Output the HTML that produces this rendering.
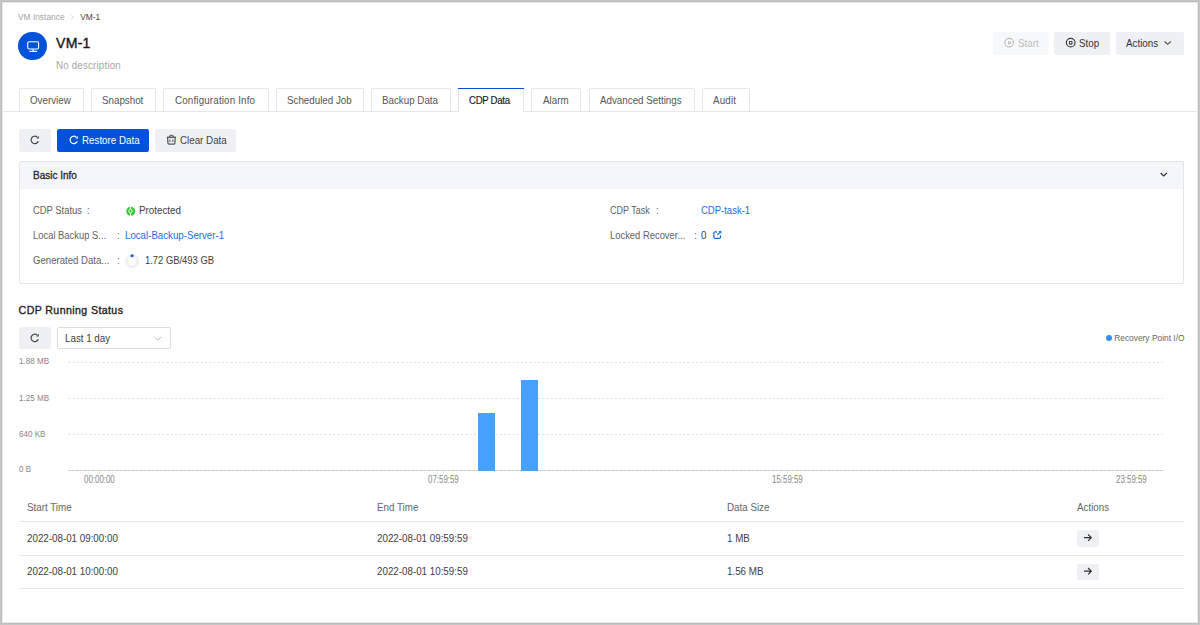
<!DOCTYPE html>
<html><head><meta charset="utf-8">
<style>
*{box-sizing:border-box;margin:0;padding:0}
html,body{width:1200px;height:625px;overflow:hidden;background:#fff}
body{font-family:"Liberation Sans",sans-serif;font-size:9.8px;line-height:1;color:#333;position:relative}
.frame{position:absolute;left:0;top:0;width:1200px;height:625px;border:1px solid #c6c6c6;box-shadow:inset 0 0 0 1px #bcbcbc,inset 0 0 0 2px #ebebeb;z-index:50;pointer-events:none}
.a{position:absolute;white-space:nowrap;line-height:1}
.btn{position:absolute;height:23px;border-radius:2px;background:#eff0f4}
.tab{position:absolute;top:88px;height:23.5px;border:1px solid #e4e6eb;border-bottom:none;border-radius:2px 2px 0 0;background:#fff}
.tt{position:absolute;top:96px;color:#555;line-height:1;white-space:nowrap}
.lbl{color:#616161}
.val{color:#3d3d3d}
.link{color:#1d6ae0}
.ylab{font-size:8.5px;color:#868686;transform:scaleX(0.95);transform-origin:0 0}
.grid{position:absolute;left:68px;width:1095px;height:1px}
.bar{position:absolute;background:#47a1ff}
.th{color:#666}
.td{color:#404040}
.hr{position:absolute;left:18.6px;width:1165.4px;height:1px;background:#e6e8eb}
svg{position:absolute;overflow:visible}
</style></head><body>
<div class="frame"></div>

<!-- breadcrumb -->
<div class="a" style="left:18px;top:13px;font-size:8.4px;color:#a3a3a3">VM Instance</div>
<svg style="left:70px;top:14px" width="5" height="6" viewBox="0 0 5 6"><path d="M1.2 1 L3.4 3.1 L1.2 5.2" fill="none" stroke="#d0d0d0" stroke-width="0.9"/></svg>
<div class="a" style="left:80.2px;top:13px;font-size:8.4px;color:#454545">VM-1</div>

<!-- avatar -->
<div class="a" style="left:18.4px;top:31.9px;width:28.6px;height:28.6px;border-radius:50%;background:#0052d9"></div>
<svg style="left:0;top:0" width="1" height="1" viewBox="0 0 1 1">
<rect x="27.7" y="41.7" width="10.9" height="7.3" rx="1.4" fill="none" stroke="#fff" stroke-width="1.1"/>
<path d="M33.15 49 V51.3 M29.4 51.4 H36.9" stroke="#fff" stroke-width="1.1" fill="none"/>
</svg>
<div class="a" style="left:56.1px;top:36px;font-size:14.1px;color:#1a1a1a;letter-spacing:0.2px;-webkit-text-stroke:0.4px #1a1a1a">VM-1</div>
<div class="a" style="left:55.9px;top:61px;font-size:10.19px;color:#a6a6a6;letter-spacing:0.18px;transform:scaleX(0.9617);transform-origin:0 0">No description</div>

<!-- header buttons -->
<div class="btn" style="left:993px;top:32.2px;width:55.6px;height:22.6px;background:#f7f8fa"></div>
<svg style="left:0;top:0" width="1" height="1"><circle cx="1009.2" cy="42.7" r="4.3" fill="none" stroke="#bdbdbd" stroke-width="1.1"/><path d="M1008.6 41.4 L1011.3 42.8 L1008.6 44.2 Z" fill="none" stroke="#bdbdbd" stroke-width="1" stroke-linejoin="round"/></svg>
<div class="a" style="left:1017.6px;top:39px;color:#bcbcbc;font-size:10.19px;transform:scaleX(0.9617);transform-origin:0 0">Start</div>
<div class="btn" style="left:1054px;top:32.2px;width:56px;height:22.6px"></div>
<svg style="left:0;top:0" width="1" height="1"><circle cx="1070.7" cy="42.65" r="4.3" fill="none" stroke="#3a3a3a" stroke-width="1.2"/><rect x="1069.4" y="41.5" width="2.6" height="2.6" rx="0.5" fill="none" stroke="#3a3a3a" stroke-width="1.1"/></svg>
<div class="a" style="left:1079.2px;top:39px;color:#333;font-size:10.19px;transform:scaleX(0.9617);transform-origin:0 0">Stop</div>
<div class="btn" style="left:1116px;top:32.2px;width:68px;height:22.6px"></div>
<div class="a" style="left:1126.2px;top:39px;color:#333;font-size:10.19px;transform:scaleX(0.9617);transform-origin:0 0">Actions</div>
<svg style="left:0;top:0" width="1" height="1"><path d="M1164.6 41.5 L1167.7 44.4 L1170.8 41.5" fill="none" stroke="#4a4a4a" stroke-width="1.05"/></svg>

<!-- tabs -->
<div class="a" style="left:2px;top:111px;width:1196px;height:1px;background:#e4e6eb;z-index:1"></div>
<div class="tab" style="left:18.5px;width:65.5px"></div><div class="tt" style="left:30.2px;font-size:10.19px;transform:scaleX(0.9617);transform-origin:0 0">Overview</div>
<div class="tab" style="left:90.7px;width:65.5px"></div><div class="tt" style="left:102.3px;font-size:10.19px;transform:scaleX(0.9617);transform-origin:0 0">Snapshot</div>
<div class="tab" style="left:163px;width:105.5px"></div><div class="tt" style="left:174.6px;letter-spacing:0.17px;font-size:10.19px;transform:scaleX(0.9617);transform-origin:0 0">Configuration Info</div>
<div class="tab" style="left:275.5px;width:88px"></div><div class="tt" style="left:286.8px;font-size:10.19px;transform:scaleX(0.9617);transform-origin:0 0">Scheduled Job</div>
<div class="tab" style="left:370.5px;width:80.5px"></div><div class="tt" style="left:382.2px;font-size:10.19px;transform:scaleX(0.9617);transform-origin:0 0">Backup Data</div>
<div class="tab" style="left:457.5px;width:66px;height:24px;border-top:none;z-index:2"></div>
<div class="a" style="left:457.5px;top:88px;width:66.5px;height:1.4px;background:#0052d9;z-index:3"></div>
<div class="tt" style="left:469.4px;font-size:10.0px;letter-spacing:-0.3px;color:#1f1f1f;-webkit-text-stroke:0.2px #1f1f1f;z-index:4;transform:scaleX(0.96);transform-origin:0 0">CDP Data</div>
<div class="tab" style="left:530.6px;width:50px"></div><div class="tt" style="left:542.8px;font-size:10.19px;transform:scaleX(0.9617);transform-origin:0 0">Alarm</div>
<div class="tab" style="left:588.5px;width:106.3px"></div><div class="tt" style="left:600px;font-size:10.19px;transform:scaleX(0.9617);transform-origin:0 0">Advanced Settings</div>
<div class="tab" style="left:702px;width:47.5px"></div><div class="tt" style="left:713.2px;letter-spacing:0.2px;font-size:10.19px;transform:scaleX(0.9617);transform-origin:0 0">Audit</div>

<!-- toolbar -->
<div class="btn" style="left:19px;top:129.2px;width:31.8px;height:22.6px"></div>
<svg style="left:29px;top:134px" width="12" height="12" viewBox="0 0 12 12"><path d="M9.28 7.17 A3.7 3.7 0 1 1 8.18 3.07" fill="none" stroke="#444" stroke-width="1.2"/><path d="M9.9 1.9 L9.9 4.6 L7.2 4.5 Z" fill="#444"/></svg>
<div class="btn" style="left:57px;top:129.2px;width:92px;height:22.6px;background:#0052d9"></div>
<svg style="left:67.7px;top:134px" width="12" height="12" viewBox="0 0 12 12"><path d="M9.28 7.17 A3.7 3.7 0 1 1 8.18 3.07" fill="none" stroke="#fff" stroke-width="1.2"/><path d="M9.9 1.9 L9.9 4.6 L7.2 4.5 Z" fill="#fff"/></svg>
<div class="a" style="left:82.3px;top:136px;color:#fff;font-size:10.19px;transform:scaleX(0.9617);transform-origin:0 0">Restore Data</div>
<div class="btn" style="left:155px;top:129.2px;width:81px;height:22.6px"></div>
<svg style="left:166px;top:134px" width="11" height="12" viewBox="0 0 11 12"><path d="M0.7 3.3 H10.1" stroke="#555" stroke-width="1.3"/><path d="M3.5 3.3 L4.1 1.6 Q4.3 1.2 4.8 1.2 H6.1 Q6.6 1.2 6.8 1.6 L7.4 3.3" fill="none" stroke="#555" stroke-width="1.15"/><path d="M1.6 3.3 L1.9 9.2 Q2 10 2.8 10 H8 Q8.8 10 8.9 9.2 L9.2 3.3" fill="none" stroke="#555" stroke-width="1.25"/><path d="M3.9 5.5 V8 M6.8 5.5 V8" stroke="#555" stroke-width="1"/></svg>
<div class="a" style="left:179.5px;top:136px;color:#444;font-size:10.19px;transform:scaleX(0.9617);transform-origin:0 0">Clear Data</div>

<!-- basic info panel -->
<div class="a" style="left:19px;top:161.3px;width:1165px;height:122.5px;border:1px solid #e4e6eb;border-radius:2px;background:#fff"></div>
<div class="a" style="left:20px;top:162px;width:1163px;height:26.8px;background:#f5f6f9"></div>
<div class="a" style="left:33.3px;top:171px;font-size:10.4px;color:#262626;-webkit-text-stroke:0.3px #262626;transform:scaleX(0.9615);transform-origin:0 0">Basic Info</div>
<svg style="left:0;top:0" width="1" height="1"><path d="M1160.6 173 L1163.7 175.9 L1166.8 173" fill="none" stroke="#333" stroke-width="1.2"/></svg>

<div class="a lbl" style="left:33px;top:206px;font-size:10.0px;transform:scaleX(0.94);transform-origin:0 0">CDP Status</div>
<div class="a lbl" style="left:87.4px;top:206px;font-size:10.19px;transform:scaleX(0.9617);transform-origin:0 0">:</div>
<svg style="left:0;top:0" width="1" height="1"><circle cx="130.75" cy="211.25" r="4.5" fill="#3cc83c"/><path d="M130.6 206.4 V208.3 L128.6 211.3 L130.5 213.6 V216.1 M130.6 208.3 L132.3 211.1 L130.5 213.6" fill="none" stroke="#fff" stroke-width="0.95" stroke-linejoin="round"/></svg>
<div class="a val" style="left:139.3px;top:206px;font-size:10.19px;transform:scaleX(0.9617);transform-origin:0 0">Protected</div>

<div class="a lbl" style="left:33px;top:231px;font-size:10.0px;transform:scaleX(0.94);transform-origin:0 0">Local Backup S...</div>
<div class="a lbl" style="left:116.9px;top:231px;font-size:10.19px;transform:scaleX(0.9617);transform-origin:0 0">:</div>
<div class="a link" style="left:125px;top:231px;font-size:10.09px;transform:scaleX(0.9613);transform-origin:0 0">Local-Backup-Server-1</div>

<div class="a lbl" style="left:33px;top:256px;font-size:10.0px;transform:scaleX(0.96);transform-origin:0 0">Generated Data...</div>
<div class="a lbl" style="left:116.9px;top:256px;font-size:10.19px;transform:scaleX(0.9617);transform-origin:0 0">:</div>
<svg style="left:0;top:0" width="1" height="1"><circle cx="132.2" cy="261.2" r="5.6" fill="none" stroke="#f1f1f1" stroke-width="2.9"/><circle cx="132.1" cy="255.7" r="1.55" fill="#0a58f0"/></svg>
<div class="a val" style="left:145.3px;top:256px;font-size:10.0px;transform:scaleX(0.94);transform-origin:0 0">1.72 GB/493 GB</div>

<div class="a lbl" style="left:609.8px;top:206px;font-size:10.0px;transform:scaleX(0.9);transform-origin:0 0">CDP Task</div>
<div class="a lbl" style="left:655.8px;top:206px;font-size:10.19px;transform:scaleX(0.9617);transform-origin:0 0">:</div>
<div class="a link" style="left:701.4px;top:206px;font-size:10.0px;transform:scaleX(0.95);transform-origin:0 0">CDP-task-1</div>
<div class="a lbl" style="left:609.8px;top:231px;font-size:10.0px;transform:scaleX(0.94);transform-origin:0 0">Locked Recover...</div>
<div class="a lbl" style="left:693.5px;top:231px;font-size:10.19px;transform:scaleX(0.9617);transform-origin:0 0">:</div>
<div class="a val" style="left:701.4px;top:231px;font-size:10.19px;transform:scaleX(0.9617);transform-origin:0 0">0</div>
<svg style="left:0;top:0" width="1" height="1"><path d="M717 231.8 H715 Q713.9 231.8 713.9 232.9 V237.3 Q713.9 238.4 715 238.4 H719.4 Q720.5 238.4 720.5 237.3 V235.2" fill="none" stroke="#1d6ae0" stroke-width="1.2"/><path d="M717.4 235 L720.3 232.1" stroke="#1d6ae0" stroke-width="1.2"/><path d="M718.3 231 H721.4 V234.1 Z" fill="#1d6ae0"/></svg>

<!-- running status -->
<div class="a" style="left:18.6px;top:305px;font-size:10.6px;letter-spacing:0.4px;color:#1f1f1f;-webkit-text-stroke:0.35px #1f1f1f">CDP Running Status</div>
<div class="btn" style="left:18.7px;top:326.7px;width:32.3px;height:22.3px"></div>
<svg style="left:29px;top:331.6px" width="12" height="12" viewBox="0 0 12 12"><path d="M9.28 7.17 A3.7 3.7 0 1 1 8.18 3.07" fill="none" stroke="#444" stroke-width="1.2"/><path d="M9.9 1.9 L9.9 4.6 L7.2 4.5 Z" fill="#444"/></svg>
<div class="a" style="left:57.4px;top:326.5px;width:113.3px;height:22.5px;border:1px solid #dcdde0;border-radius:2px"></div>
<div class="a val" style="left:65.2px;top:334px;font-size:10.19px;transform:scaleX(0.9617);transform-origin:0 0">Last 1 day</div>
<svg style="left:0;top:0" width="1" height="1"><path d="M154.3 337.2 L157.8 339.9 L161.2 337.2" fill="none" stroke="#b0b0b0" stroke-width="0.9"/></svg>

<div class="a" style="left:1105.85px;top:334.85px;width:5.8px;height:5.8px;border-radius:50%;background:#3291f8"></div>
<div class="a" style="left:1114.2px;top:334px;font-size:8.4px;color:#666">Recovery Point I/O</div>

<div class="a ylab" style="left:18.8px;top:357px">1.88 MB</div>
<div class="a ylab" style="left:18.8px;top:394px">1.25 MB</div>
<div class="a ylab" style="left:18.8px;top:430px">640 KB</div>
<div class="a ylab" style="left:18.8px;top:465px">0 B</div>
<svg class="grid" style="top:362px" width="1095" height="1"><line x1="0.3" y1="0.5" x2="1095" y2="0.5" stroke="#dcdee1" stroke-width="1" stroke-dasharray="2.1 2.17"/></svg>
<svg class="grid" style="top:398px" width="1095" height="1"><line x1="0.3" y1="0.5" x2="1095" y2="0.5" stroke="#dcdee1" stroke-width="1" stroke-dasharray="2.1 2.17"/></svg>
<svg class="grid" style="top:434px" width="1095" height="1"><line x1="0.3" y1="0.5" x2="1095" y2="0.5" stroke="#dcdee1" stroke-width="1" stroke-dasharray="2.1 2.17"/></svg>
<div class="a" style="left:68px;top:470px;width:1095px;height:1px;background-image:linear-gradient(to right,#cfcfcf 0 3px,#e6e6e6 3px 4px);background-size:4px 1px"></div>
<div class="a" style="left:99.2px;top:470px;width:1px;height:3px;background:#dcdcdc"></div>
<div class="a" style="left:443.2px;top:470px;width:1px;height:3px;background:#dcdcdc"></div>
<div class="a" style="left:787.2px;top:470px;width:1px;height:3px;background:#dcdcdc"></div>
<div class="a" style="left:1131.2px;top:470px;width:1px;height:3px;background:#dcdcdc"></div>
<div class="bar" style="left:478px;top:412.7px;width:17px;height:58.3px"></div>
<div class="bar" style="left:521px;top:380px;width:17px;height:91px"></div>
<div class="a ylab" style="left:84px;top:475px;font-size:10px;transform:scaleX(0.79)">00:00:00</div>
<div class="a ylab" style="left:428px;top:475px;font-size:10px;transform:scaleX(0.79)">07:59:59</div>
<div class="a ylab" style="left:772px;top:475px;font-size:10px;transform:scaleX(0.79)">15:59:59</div>
<div class="a ylab" style="left:1116px;top:475px;font-size:10px;transform:scaleX(0.79)">23:59:59</div>

<!-- table -->
<div class="a" style="left:18.6px;top:493.5px;width:1165.4px;height:28px;background:#fefefe"></div>
<div class="a th" style="left:27.4px;top:503px;font-size:10.19px;transform:scaleX(0.9617);transform-origin:0 0">Start Time</div>
<div class="a th" style="left:377px;top:503px;font-size:10.19px;transform:scaleX(0.9617);transform-origin:0 0">End Time</div>
<div class="a th" style="left:727px;top:503px;font-size:10.19px;transform:scaleX(0.9617);transform-origin:0 0">Data Size</div>
<div class="a th" style="left:1077px;top:503px;font-size:10.19px;transform:scaleX(0.9617);transform-origin:0 0">Actions</div>
<div class="hr" style="top:521px"></div>
<div class="a td" style="left:27.2px;top:534px;font-size:10.19px;transform:scaleX(0.9617);transform-origin:0 0">2022-08-01 09:00:00</div>
<div class="a td" style="left:376.8px;top:534px;font-size:10.19px;transform:scaleX(0.9617);transform-origin:0 0">2022-08-01 09:59:59</div>
<div class="a td" style="left:726.8px;top:534px;font-size:10.19px;transform:scaleX(0.9617);transform-origin:0 0">1 MB</div>
<div class="btn" style="left:1076.6px;top:530.3px;width:22.2px;height:16.4px"></div>
<svg style="left:0;top:0" width="1" height="1"><path d="M1084 537.7 H1091.2 M1088.1 534.5 L1091.3 537.7 L1088.1 540.9" fill="none" stroke="#333" stroke-width="1.2"/></svg>
<div class="hr" style="top:555px"></div>
<div class="a td" style="left:27.2px;top:567px;font-size:10.19px;transform:scaleX(0.9617);transform-origin:0 0">2022-08-01 10:00:00</div>
<div class="a td" style="left:376.8px;top:567px;font-size:10.19px;transform:scaleX(0.9617);transform-origin:0 0">2022-08-01 10:59:59</div>
<div class="a td" style="left:726.8px;top:567px;font-size:10.19px;transform:scaleX(0.9617);transform-origin:0 0">1.56 MB</div>
<div class="btn" style="left:1076.6px;top:563.8px;width:22.2px;height:16.4px"></div>
<svg style="left:0;top:0" width="1" height="1"><path d="M1084 571.2 H1091.2 M1088.1 568 L1091.3 571.2 L1088.1 574.4" fill="none" stroke="#333" stroke-width="1.2"/></svg>
<div class="hr" style="top:588.3px"></div>
</body></html>
